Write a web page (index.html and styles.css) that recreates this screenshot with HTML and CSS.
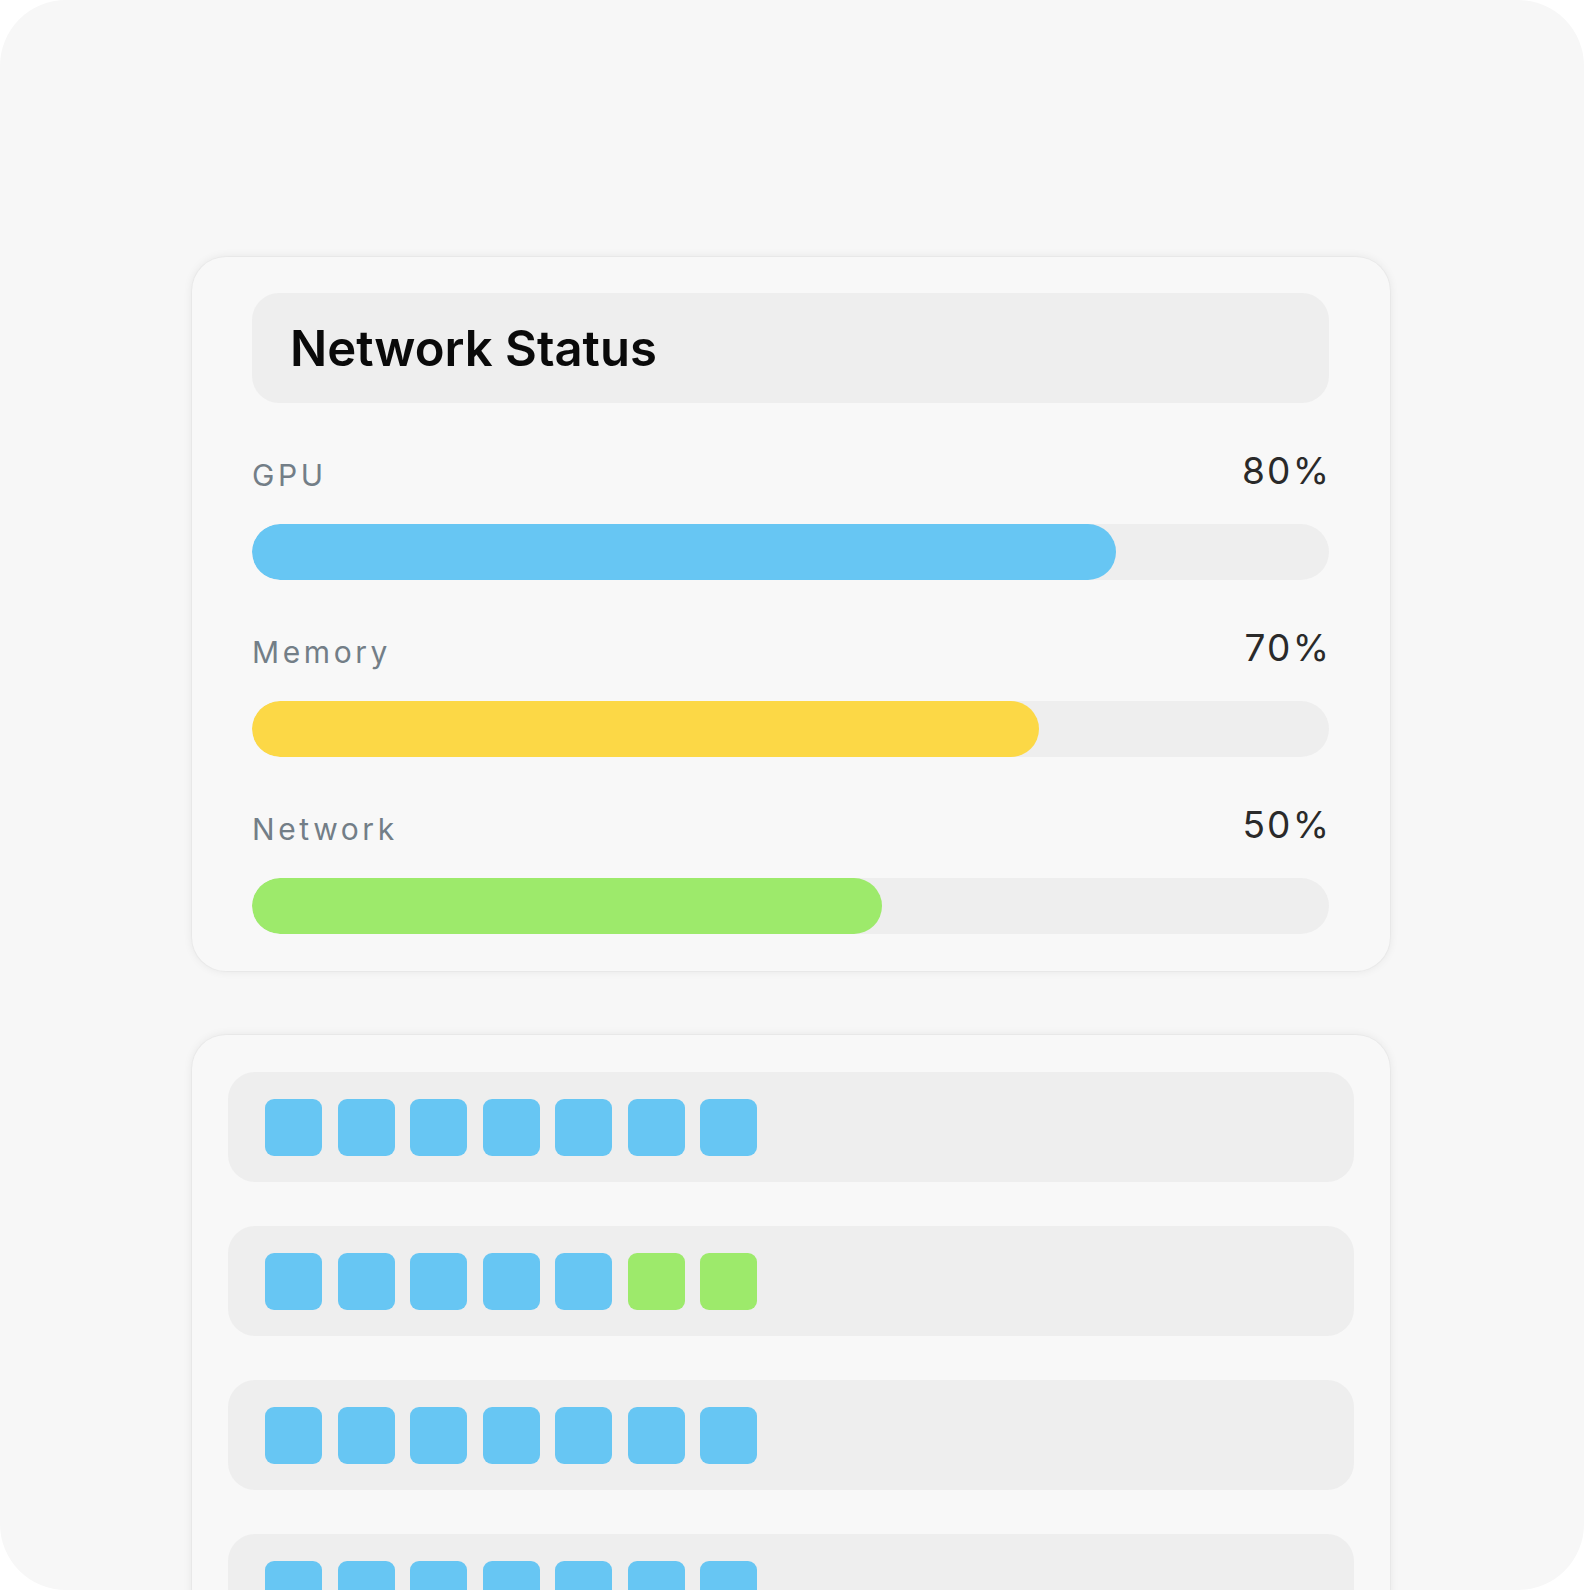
FILE: index.html
```html
<!DOCTYPE html>
<html lang="en">
<head>
<meta charset="utf-8">
<title>Network Status</title>
<link rel="stylesheet" href="styles.css">
</head>
<body>
<div class="screen">
  <section class="card status-card">
    <h1 class="card-title">Network Status</h1>

    <div class="metric">
      <div class="metric-head">
        <span class="metric-label">GPU</span>
        <span class="metric-value">80%</span>
      </div>
      <div class="track"><div class="fill fill-blue" style="width: 80.2%"></div></div>
    </div>

    <div class="metric">
      <div class="metric-head">
        <span class="metric-label">Memory</span>
        <span class="metric-value">70%</span>
      </div>
      <div class="track"><div class="fill fill-yellow" style="width: 73.1%"></div></div>
    </div>

    <div class="metric">
      <div class="metric-head">
        <span class="metric-label">Network</span>
        <span class="metric-value">50%</span>
      </div>
      <div class="track"><div class="fill fill-green" style="width: 58.5%"></div></div>
    </div>
  </section>

  <section class="card blocks-card">
    <div class="block-row">
      <span class="cell blue"></span><span class="cell blue"></span><span class="cell blue"></span><span class="cell blue"></span><span class="cell blue"></span><span class="cell blue"></span><span class="cell blue"></span>
    </div>
    <div class="block-row">
      <span class="cell blue"></span><span class="cell blue"></span><span class="cell blue"></span><span class="cell blue"></span><span class="cell blue"></span><span class="cell green"></span><span class="cell green"></span>
    </div>
    <div class="block-row">
      <span class="cell blue"></span><span class="cell blue"></span><span class="cell blue"></span><span class="cell blue"></span><span class="cell blue"></span><span class="cell blue"></span><span class="cell blue"></span>
    </div>
    <div class="block-row">
      <span class="cell blue"></span><span class="cell blue"></span><span class="cell blue"></span><span class="cell blue"></span><span class="cell blue"></span><span class="cell blue"></span><span class="cell blue"></span>
    </div>
  </section>
</div>
</body>
</html>
```

FILE: styles.css
```css
* {
  box-sizing: border-box;
}

html,
body {
  margin: 0;
  padding: 0;
  background: #ffffff;
}

body {
  font-family: Inter, "Noto Sans", "Liberation Sans", sans-serif;
}

.screen {
  width: 1584px;
  height: 1590px;
  border-radius: 66px;
  background: #f7f7f7;
  overflow: hidden;
  padding: 257px 194px 0 192px;
  display: flex;
  flex-direction: column;
  gap: 64px;
}

.card {
  background: #f8f8f8;
  border-radius: 34px;
  box-shadow: 0 0 0 1px rgba(0, 0, 0, 0.025), 0 0 10px rgba(0, 0, 0, 0.08);
  flex-shrink: 0;
}

/* ---- status card ---- */
.status-card {
  padding: 36px 61px 37px 60px;
  display: flex;
  flex-direction: column;
}

.card-title {
  margin: 0 0 48px;
  height: 110px;
  display: flex;
  align-items: center;
  padding: 0 38px;
  border-radius: 27px;
  background: #eeeeee;
  font-size: 49px;
  font-weight: 600;
  color: #0a0a0a;
  letter-spacing: 0;
}

.metric + .metric {
  margin-top: 48px;
}

.metric-head {
  height: 40px;
  display: flex;
  justify-content: space-between;
  align-items: flex-end;
  margin-bottom: 33px;
}

.metric-label {
  font-size: 30px;
  line-height: 36px;
  color: #737e87;
  letter-spacing: 0.12em;
  margin-bottom: -2px;
}

.metric-value {
  font-size: 37px;
  line-height: 40px;
  color: #2a2a2a;
  letter-spacing: 0.06em;
  margin-right: -0.06em;
}

.track {
  height: 56px;
  border-radius: 28px;
  background: #eeeeee;
  overflow: hidden;
}

.fill {
  height: 100%;
  border-radius: 28px;
}

.fill-blue {
  background: #67c6f3;
}

.fill-yellow {
  background: #fcd846;
}

.fill-green {
  background: #9dea6b;
}

/* ---- blocks card ---- */
.blocks-card {
  padding: 37px 36px;
  display: flex;
  flex-direction: column;
  gap: 44px;
}

.block-row {
  height: 110px;
  border-radius: 27px;
  background: #eeeeee;
  padding: 0 37px;
  display: flex;
  align-items: center;
  gap: 15.5px;
}

.cell {
  width: 57px;
  height: 57px;
  border-radius: 9px;
  flex-shrink: 0;
}

.cell.blue {
  background: #67c6f3;
}

.cell.green {
  background: #9dea6b;
}
```
